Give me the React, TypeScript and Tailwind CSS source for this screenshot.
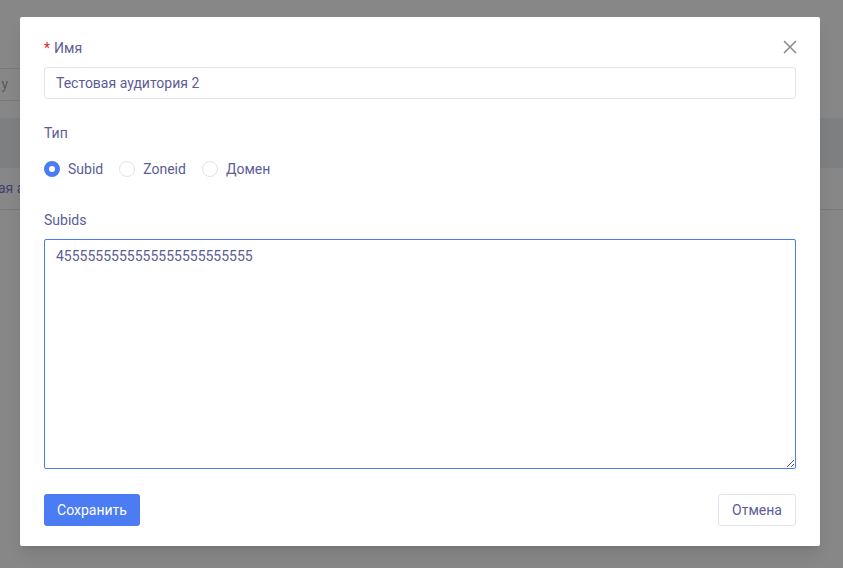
import React, { useState } from "react";

const font = { fontFamily: 'Roboto, "Noto Sans", sans-serif' };

function Radio({ label, checked, onClick }: { label: string; checked: boolean; onClick: () => void }) {
  return (
    <label className="flex cursor-pointer items-center gap-2" onClick={onClick}>
      <span
        className={
          checked
            ? "h-4 w-4 rounded-full border-[5px] border-[#4b7cf3] bg-white"
            : "h-4 w-4 rounded-full border border-[#dfe3ec] bg-white"
        }
      />
      <span className="text-[14px] leading-5 text-[#5b5d96]">{label}</span>
    </label>
  );
}

export default function App() {
  const [type, setType] = useState("subid");
  const [name, setName] = useState("Тестовая аудитория 2");
  const [subids, setSubids] = useState("4555555555555555555555555");

  return (
    <div className="relative h-[568px] w-[843px] overflow-hidden bg-[#878787]" style={font}>
      {/* page behind the overlay */}
      <div className="flex flex-col pt-[68px]">
        <div className="flex h-[33px] w-[120px] items-center justify-end border-y border-[#7a7a7a] pr-[112px] text-[14px] text-[#5a5a5a]">
          у
        </div>
        <div className="mt-[17px] h-[50px] bg-[#7e7f81]" />
        <div className="flex h-[42px] items-center border-b border-[#7a7a7a] text-[14px] text-[#3f4070]">
          <span className="-ml-[2px]">ая ау</span>
        </div>
      </div>

      {/* modal */}
      <div className="absolute left-5 top-[17px] flex w-[800px] flex-col rounded-[2px] bg-white px-6 pb-5 pt-[21px] shadow-lg">
        <button className="absolute right-[22px] top-[22px] text-[#8c8c8c]">
          <svg width="16" height="16" viewBox="0 0 16 16" fill="none" stroke="currentColor" strokeWidth="1.6">
            <path d="M2 2 L14 14 M14 2 L2 14" />
          </svg>
        </button>

        <div className="text-[14px] leading-5 text-[#5b5d96]">
          <span className="mr-1 text-[#e0242e]">*</span>Имя
        </div>
        <input
          value={name}
          onChange={(e) => setName(e.target.value)}
          className="mt-[9px] h-8 rounded-[3px] border border-[#e2e5ee] px-[11px] text-[14px] text-[#5b5d96] outline-none"
          style={font}
        />

        <div className="mt-6 text-[14px] leading-5 text-[#5b5d96]">Тип</div>
        <div className="mt-4 flex items-center gap-4">
          <Radio label="Subid" checked={type === "subid"} onClick={() => setType("subid")} />
          <Radio label="Zoneid" checked={type === "zoneid"} onClick={() => setType("zoneid")} />
          <Radio label="Домен" checked={type === "domain"} onClick={() => setType("domain")} />
        </div>

        <div className="mt-[31px] text-[14px] leading-5 text-[#5b5d96]">Subids</div>
        <textarea
          value={subids}
          onChange={(e) => setSubids(e.target.value)}
          className="mt-[9px] h-[230px] rounded-[2px] border border-[#4b7cf3] px-[11px] py-[6px] text-[14px] leading-5 text-[#5b5d96] outline-none"
          style={font}
        />

        <div className="mt-[25px] flex items-center justify-between">
          <button className="h-8 w-24 rounded-[3px] bg-[#4b7cf3] text-[14px] text-white">Сохранить</button>
          <button className="h-8 w-[78px] rounded-[3px] border border-[#e2e5ee] bg-white text-[14px] text-[#5b5d96]">
            Отмена
          </button>
        </div>
      </div>
    </div>
  );
}
